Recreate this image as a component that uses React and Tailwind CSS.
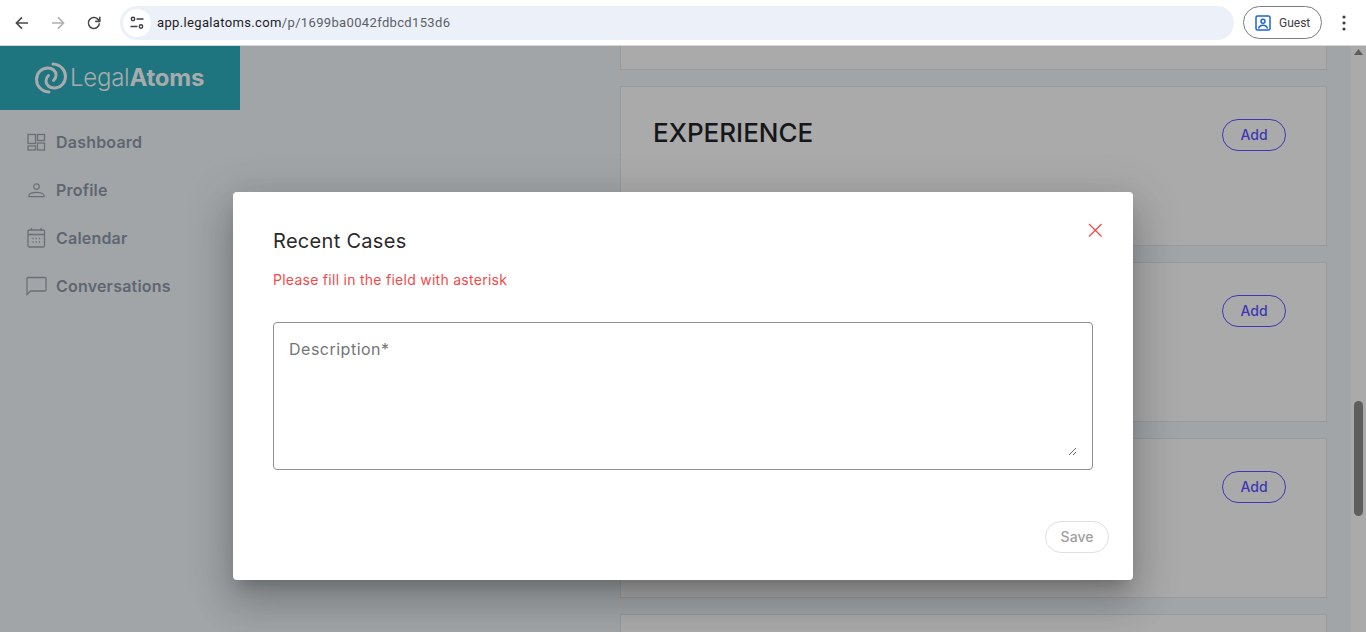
import React from "react";

const Back = ({ c = "#4a4a4a", flip }) => (
  <svg width="16" height="16" viewBox="0 0 16 16" fill="none" stroke={c} strokeWidth="1.6" style={flip ? { transform: "scaleX(-1)" } : undefined}>
    <path d="M14 8H2.6M8 2.4 2.4 8 8 13.6" />
  </svg>
);

const AddBtn = () => (
  <button className="w-16 h-8 rounded-full border border-[#3f38b4] text-[#3f38b4] text-sm font-medium">Add</button>
);

const Card = ({ title }) => (
  <div className="h-40 shrink-0 w-[707px] bg-[#aaaaaa] border border-[#9a9a9a] flex justify-between items-start pl-8 pr-10 pt-8">
    <div className="text-[26px] leading-7 font-medium text-[#15171a]">{title}</div>
    <AddBtn />
  </div>
);

const navIcon = "text-[#6c7076]";
const nav = [
  ["Dashboard", (
    <svg width="20" height="20" viewBox="0 0 20 20" fill="none" stroke="currentColor" strokeWidth="1.3" className={navIcon}>
      <rect x="2" y="2.5" width="7.5" height="9" /><rect x="11.5" y="2.5" width="7" height="6" />
      <rect x="2" y="14" width="7.5" height="4" /><rect x="11.5" y="11" width="7" height="7" />
    </svg>
  )],
  ["Profile", (
    <svg width="20" height="20" viewBox="0 0 20 20" fill="none" stroke="currentColor" strokeWidth="1.2" className={navIcon}>
      <circle cx="10.5" cy="6.6" r="2.8" /><path d="M3 16.6v-1c0-1.9 3.4-3.2 7.5-3.2s7.5 1.3 7.5 3.2v1z" />
    </svg>
  )],
  ["Calendar", (
    <svg width="20" height="20" viewBox="0 0 20 20" fill="none" stroke="currentColor" strokeWidth="1.3" className={navIcon}>
      <rect x="2" y="2" width="16.5" height="17" rx="1.2" /><path d="M2 6.5h16.5M5.5 0v3M15 0v3" />
      <path d="M6.5 10.5h1.2M9.7 10.5h1.2M12.9 10.5h1.2M6.5 14h1.2M9.7 14h1.2M12.9 14h1.2" strokeWidth="1.4" />
    </svg>
  )],
  ["Conversations", (
    <svg width="21" height="20" viewBox="0 0 21 20" fill="none" stroke="currentColor" strokeWidth="1.3" className={navIcon}>
      <path d="M1 18.5V2.5A1 1 0 0 1 2 1.5h17a1 1 0 0 1 1 1v11.5a1 1 0 0 1-1 1H4.5z" />
    </svg>
  )],
];

const swirl = "M18 2C25.5 2.5 30.5 8 30.5 14.5C30.5 21 25.5 26 19 26C14.5 26 11 23 11 19C11 17 11.8 15 13.5 13.5";

export default function App() {
  return (
    <div className="relative h-[632px] w-[1366px] overflow-hidden flex flex-col bg-[#a1a5a8] font-['Inter',sans-serif]">
      <header className="h-[46px] shrink-0 bg-white border-b border-[#d6d6d6] flex items-center pl-[14px] pr-[14px]">
        <Back />
        <div className="w-5" />
        <Back c="#b0b0b0" flip />
        <div className="w-5" />
        <svg width="16" height="16" viewBox="0 0 16 16" fill="none" stroke="#4a4a4a" strokeWidth="1.6">
          <path d="M13.4 8.2A5.5 5.5 0 1 1 11.8 4.1L13.6 6" /><path d="M13.8 1.8v4.6H9.2" />
        </svg>
        <div className="ml-[18px] w-[1114px] h-[34px] rounded-full bg-[#ebf0f9] flex items-center pl-[3px]">
          <div className="w-[28px] h-[28px] rounded-full bg-white flex items-center justify-center">
            <svg width="16" height="16" viewBox="0 0 16 16" fill="none" stroke="#3c4043" strokeWidth="1.4">
              <circle cx="4" cy="4" r="1.7" /><path d="M7.5 4H14.5M1.5 11.5H8.5" /><circle cx="12" cy="11.5" r="1.7" />
            </svg>
          </div>
          <div className="ml-[6px] text-[13px] font-['Roboto',sans-serif] tracking-[0.35px] text-[#5c6066]">
            <span className="text-[#1f2024]">app.legalatoms.com</span>/p/1699ba0042fdbcd153d6
          </div>
        </div>
        <div className="ml-[9px] w-[79px] h-[33px] rounded-full border border-[#7c7c7c] flex items-center pl-[11px]">
          <svg width="16" height="16" viewBox="0 0 16 16" fill="none" stroke="#1a66d6" strokeWidth="1.5">
            <rect x="1" y="1" width="14" height="14" rx="1.5" /><circle cx="8" cy="6.3" r="2" /><path d="M3.5 13.5c.6-2.4 2.3-3.3 4.5-3.3s3.9.9 4.5 3.3" />
          </svg>
          <span className="ml-[8px] text-xs font-['Roboto',sans-serif] text-[#3c4043]">Guest</span>
        </div>
        <svg width="4" height="16" viewBox="0 0 4 16" fill="#3c4043" className="ml-5">
          <circle cx="2" cy="2" r="1.6" /><circle cx="2" cy="8" r="1.6" /><circle cx="2" cy="14" r="1.6" />
        </svg>
      </header>

      <div className="flex-1 min-h-0 flex">
        <aside className="w-[240px] shrink-0">
          <div className="h-16 bg-[#1e7580] flex items-center pl-[35px]">
            <svg width="32" height="32" viewBox="0 0 32 32" fill="none" stroke="#a8aaab" strokeWidth="3" strokeLinecap="round">
              <path d={swirl} />
              <path d={swirl} transform="rotate(180 16 16)" />
            </svg>
            <div className="ml-[3px] text-[24px] tracking-[-0.25px] text-[#a8aaab] font-light">
              Legal<span className="font-bold">Atoms</span>
            </div>
          </div>
          <nav className="pt-2 pl-[26px] flex flex-col">
            {nav.map(([label, icon]) => (
              <div key={label} className="h-12 flex items-center">
                <span className="w-[30px] flex">{icon}</span>
                <span className="text-base font-semibold tracking-[0.2px] text-[#5f6670]">{label}</span>
              </div>
            ))}
          </nav>
        </aside>

        <main className="flex-1 min-w-0 pl-[380px] flex flex-col gap-4 overflow-hidden">
          <div className="h-6 shrink-0 w-[707px] bg-[#aaaaaa] border border-t-0 border-[#9a9a9a]" />
          <Card title="EXPERIENCE" />
          <Card title="" />
          <Card title="" />
          <div className="h-40 shrink-0 w-[707px] bg-[#aaaaaa] border border-[#9a9a9a]" />
        </main>

        <div className="w-[15px] shrink-0 bg-[#aaaaaa] flex flex-col items-center pt-[3px]">
          <svg width="9" height="6" viewBox="0 0 9 6" fill="#5c5c5c"><path d="M4.5 0 9 6H0z" /></svg>
          <div className="mt-[346px] w-[9px] h-[115px] rounded-full bg-[#5e5e5e]" />
        </div>
      </div>

      <div className="absolute left-[233px] top-[192px] w-[900px] h-[388px] bg-white rounded shadow-[0_11px_15px_-7px_rgba(0,0,0,0.2),0_24px_38px_3px_rgba(0,0,0,0.14),0_9px_46px_8px_rgba(0,0,0,0.12)] flex flex-col px-10 pt-[37px]">
        <div className="flex justify-between items-start">
          <h2 className="text-[20px] leading-6 tracking-[0.3px] text-[#2a2a2a]">Recent Cases</h2>
          <svg width="14" height="14" viewBox="0 0 14 14" fill="none" stroke="#f44a4a" strokeWidth="1.3" className="mt-[-6px] mr-[-9px]">
            <path d="M1 1l12.5 12.5M13.5 1 1 13.5" />
          </svg>
        </div>
        <p className="mt-[17px] text-sm leading-5 tracking-[0.27px] text-[#f44a4a]">Please fill in the field with asterisk</p>
        <div className="mt-[32px] w-[820px] h-[148px] rounded border border-[#8f8f8f] pl-[15px] pr-[15px] pt-[14px] pb-[13px]">
          <textarea
            placeholder="Description*"
            className="block w-full h-full text-base leading-6 tracking-[0.5px] outline-none placeholder:text-[#757575]"
          />
        </div>
        <div className="mt-[51px] flex justify-end mr-[-16px]">
          <button className="w-16 h-8 rounded-full border border-[#e0e0e0] text-sm font-medium text-[#a0a0a0]">Save</button>
        </div>
      </div>
    </div>
  );
}
